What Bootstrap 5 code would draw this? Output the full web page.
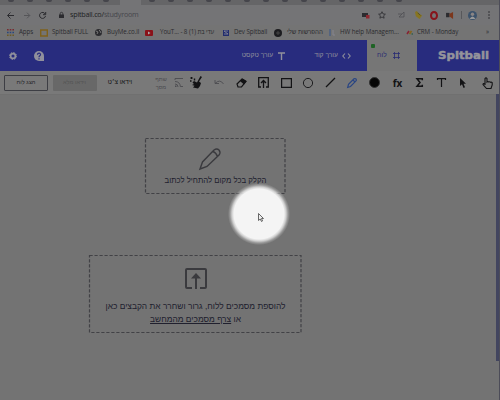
<!DOCTYPE html>
<html lang="he">
<head>
<meta charset="utf-8">
<meta name="viewport" content="width=device-width, initial-scale=1">
<title>Spitball study room</title>
<link href="https://cdn.jsdelivr.net/npm/bootstrap@5.3.0/dist/css/bootstrap.min.css" rel="stylesheet">
<style>
body{width:500px;height:400px;overflow:hidden;background:#747474;color:#2b2b2f;font:6.8px/1 "Open Sans","Liberation Sans",sans-serif;white-space:nowrap}
svg{display:block;flex:none;overflow:visible;fill:none;stroke:currentColor}
.solid{fill:currentColor;stroke:none}
.grid-row{display:grid;align-items:center;justify-items:center}
.tabstrip{height:5px;background:#656567}
.tabstrip .open-tab{margin-left:120px;width:21px;background:#747476}
.tabstrip i{width:6px;height:2px;background:#45454b;border-radius:0 0 3px 3px}
.tabstrip .gap-tabs{gap:13px}
.address{height:20px;background:#747476;grid-template-columns:20px 13px 19px 18px 289px 14px 17px 22px 14px 16px 16px 7px 15px 18px}
.address .url{font-size:7.2px;letter-spacing:-.22px;color:#1e1e23;justify-self:start}
.address .url span{color:#46464c}
.bookmarks{height:15px;padding-left:7px;background:#747474;justify-items:start;grid-template-columns:12px 21px 12px 43px 12px 38px 15px 63px 11px 40px 13px 42px 11px 66px 11px 69px 14px}
.bookmarks>span{font-size:6.2px;letter-spacing:-.06px}
.hd{direction:rtl;font-family:"Liberation Sans",sans-serif}
.topnav{height:31px;background:#282c7e;color:#90909c;grid-template-columns:25px 28px 187px 35px 13px 50px 17px 12px 133px}
.topnav .hd{font-size:6.7px}
.topnav .code-tab{justify-self:end}
.board-tab{background:#767676;color:#292c72;width:50px;height:31px;padding:0 17px 0 10px}
.live-dot{left:4px;top:4px;width:4px;height:4px;background:#1e6325;border-radius:1px}
.logo-word{font:bold 10.6px "DejaVu Sans",sans-serif;fill:#94949b;stroke:#94949b;stroke-width:.5;margin-left:21px}
.tools{height:23px;background:#797979;color:#131315;grid-template-columns:52px 44px 48px 30px 10px 24px 22px 22px 23px 22px 22px 22px 22px 23px 23px 21px 22px 22px 26px}
.tools>.hd{font-size:6.4px}
.tools>.box-btn{width:44px;height:16px;font-size:5.7px;padding:0;border-radius:1px;display:flex;align-items:center;justify-content:center}
.box-btn.show-board{border:1px solid #3d3e44;color:#252529}
.box-btn.muted-board{background:#686868;color:#545454;margin-left:1px}
.tools>.share{font-size:5.6px;line-height:8px;color:#4b4b50}
.fx-label{font-size:10px}
.dim{color:#4c4c50}
.pen-blue{color:#294583}
.canvas{height:306px;border-top:1px solid #707070;background:#737373;color:#3a3a3e}
.hint{position:relative}
.hint .frame-line{position:absolute;inset:0;width:100%;height:100%;stroke:#424246;stroke-width:1.2;stroke-dasharray:3.2 1.8}
.write-hint{width:141px;height:56px;margin:43px 0 0 145px;padding-top:10px}
.write-hint .pencil{margin-right:11px}
.upload-hint{width:213px;height:78px;margin:61px 0 0 89px;padding-top:13px}
.hint p{font-size:8.4px;line-height:12px;color:#20202e;margin:0}
.hint.write-hint p{margin-top:4.5px;font-size:7.75px}
.upload-hint p{margin-top:10px;line-height:12.5px}
.spotlight{left:224.5px;top:180px;width:68px;height:68px;background:radial-gradient(circle,#f4f4f4 0 25px,rgba(240,240,240,.75) 27px,rgba(235,235,235,.3) 29px,rgba(235,235,235,0) 31px)}
.spotlight svg{margin:7px 0 0 5px}
.scroll-edge{right:1px;top:94px;width:3px;height:267px;background:#42455f}
.page-edge{right:0;top:0;width:1px;height:400px;background:#4c4c58}
</style>
<script src="https://cdn.jsdelivr.net/npm/bootstrap@5.3.0/dist/js/bootstrap.bundle.min.js"></script>
</head>
<body class="position-relative">
<div class="tabstrip d-flex">
  <div class="d-flex gap-tabs ps-2 position-absolute"><i></i><i></i><i></i><i></i><i></i><i></i></div>
  <div class="open-tab"></div>
  <div class="d-flex gap-tabs ps-2"><i></i><i></i><i></i><i></i><i></i><i></i><i></i><i></i><i></i><i></i><i></i><i></i><i></i><i></i></div>
</div>
<div class="address grid-row">
  <svg width="7" height="7" viewBox="0 0 7 7"><path d="M7 3.5H.8M3.500.5l-3 3 3 3"/></svg>
  <svg class="dim" width="6" height="7" viewBox="0 0 6 7" stroke-width=".8"><path d="M0 3.500h5.500M3 .7l2.800 2.800L3 6.300"/></svg>
  <svg width="7" height="7" viewBox="0 0 7 7"><path d="M6.200 2A3 3 0 1 0 6.500 4M6.700 0v2.700H4"/></svg>
  <svg width="5" height="6" viewBox="0 0 5 6"><path class="solid" d="M0 2.500h5V6H0z"/><path d="M1.200 3V1.600a1.300 1.300 0 0 1 2.600 0V3" stroke-width=".8"/></svg>
  <div class="url">spitball.co/<span>studyroom</span></div>
  <svg width="8" height="7" viewBox="0 0 8 7"><path class="solid" d="M0 1h6v4H0z"/><path d="M4 3h3.500v3.500H4z" fill="#8d2830" stroke="none"/></svg>
  <svg width="8" height="8" viewBox="0 0 8 8" stroke-width=".8"><path d="m4 .7 1 2.200 2.400.3-1.800 1.600.5 2.400L4 6 1.900 7.200l.5-2.400L.6 3.200 3 2.900z"/></svg>
  <svg class="dim" width="7" height="6" viewBox="0 0 7 6" stroke-width=".7"><path d="M6 0v5H1zM0 2h4"/></svg>
  <svg width="8" height="8" viewBox="0 0 9 9"><path d="m0 1 2-1 3 3 3 2-3 4-4-3z" fill="#877522" stroke="none"/><path d="m3 2 3 3" stroke="#4f4c24"/></svg>
  <svg width="8" height="9" viewBox="0 0 8 9"><ellipse cx="4" cy="4.500" rx="3" ry="3.500" stroke="#86151c" stroke-width="2"/></svg>
  <svg width="8" height="7" viewBox="0 0 9 8"><path class="solid" d="M0 1h4v5H0z"/><path d="M4 2l4-2v8L4 5z" fill="#7c371c" stroke="none"/></svg>
  <svg class="dim" width="1" height="8" viewBox="0 0 1 8"><path d="M.5 0v8" stroke-width=".7"/></svg>
  <svg width="9" height="9" viewBox="0 0 9 9"><circle cx="4.500" cy="4.500" r="4.500" fill="#3c526b" stroke="none"/><circle cx="4.500" cy="3.300" r="1.700" fill="#8b8584" stroke="none"/><path d="M1.500 8q3-5 6 0z" fill="#999" stroke="none"/></svg>
  <svg width="2" height="8" viewBox="0 0 2 8"><g class="solid"><circle cx="1" cy="1" r=".8"/><circle cx="1" cy="4" r=".8"/><circle cx="1" cy="7" r=".8"/></g></svg>
</div>
<div class="bookmarks grid-row">
  <svg width="7" height="7" viewBox="0 0 7 7"><g stroke="none"><path d="M0 0h1.600v1.600H0zM2.700 0h1.600v1.600H2.700zM5.400 0H7v1.600H5.400z" fill="#762a30"/><path d="M0 2.700h1.600v1.600H0zM2.700 2.700h1.600v1.600H2.700zM5.400 2.700H7v1.600H5.400z" fill="#29477d"/><path d="M0 5.400h1.600V7H0zM2.700 5.400h1.600V7H2.700zM5.400 5.400H7V7H5.400z" fill="#6c5a27"/></g></svg>
  <span>Apps</span>
  <svg width="8" height="8" viewBox="0 0 8 8"><path d="M.7 1h6.600v6H.7z" stroke="#7e601b" stroke-width="1.400"/></svg>
  <span>Spitball FULL</span>
  <svg width="7" height="7" viewBox="0 0 7 7"><circle class="solid" cx="3.500" cy="3.500" r="3.500"/><path d="m1 2 2 1-1 2M4 1l1 1 1 2" stroke="#777"/></svg>
  <span>BuyMe.co.il</span>
  <svg width="8" height="6" viewBox="0 0 8 6"><rect width="8" height="6" rx="1" fill="#8a1219" stroke="none"/><path d="m3 1.500 2.500 1.500L3 4.500z" fill="#aaa" stroke="none"/></svg>
  <span>YouT... - 8 עדי בת (1)</span>
  <svg width="6" height="6" viewBox="0 0 6 6"><path d="M0 0h6v6H0z" fill="#222d6d" stroke="none"/><path d="M5 1H1l4 3H1" stroke="#8b8b99" stroke-width=".8"/></svg>
  <span>Dev Spitball</span>
  <svg width="8" height="8" viewBox="0 0 8 8"><circle cx="4" cy="4" r="4" fill="#1c1c1f" stroke="none"/><path d="M4 2v4M2 4h4" stroke="#555" stroke-width=".7"/></svg>
  <span class="hd">ההפרשות שלי</span>
  <svg width="7" height="7" viewBox="0 0 7 7"><path d="M1 0v7" stroke="#35548a"/><path d="M4 1v5h2" stroke="#858590"/></svg>
  <span>HW help Managem...</span>
  <svg width="7" height="5" viewBox="0 0 7 5" stroke-width="1.600"><path d="m1 4 2-3" stroke="#862334"/><path d="m3.500 4 2-3" stroke="#86651c"/><circle cx="6.200" cy="4" r=".8" fill="#225d40" stroke="none"/></svg>
  <span>CRM - Monday</span>
  <span>»</span>
</div>
<nav class="topnav grid-row">
  <svg width="8" height="8" viewBox="0 0 8 8"><circle cx="4" cy="4" r="2.400" stroke-width="1.700"/><circle cx="4" cy="4" r="3.500" stroke-width="1" stroke-dasharray="1.400 1.350"/></svg>
  <svg width="10" height="10" viewBox="0 0 10 10"><path class="solid" d="M5 0a5 5 0 1 0 0 10h5V5a5 5 0 0 0-5-5z"/><path d="M3.500 3.700C3.500 1.600 6.700 1.800 6.500 3.800 6.400 4.900 5 4.800 5 6.200M5 7.200v1.200" stroke="#282c7e" stroke-width="1.200"/></svg>
  <span></span>
  <span class="hd">עורך טקסט</span>
  <svg width="7" height="8" viewBox="0 0 7 8"><path d="M0 1h7M3.500 1v7" stroke-width="1.400"/></svg>
  <span class="hd code-tab">עורך קוד</span>
  <svg width="9" height="6" viewBox="0 0 9 6"><path d="M3 .5.8 3 3 5.500M6 .5 8.200 3 6 5.500" stroke-width="1.100"/></svg>
  <span></span>
  <div class="d-flex w-100 align-items-center">
    <div class="board-tab position-relative d-flex align-items-center justify-content-between">
      <i class="live-dot position-absolute"></i>
      <span class="hd">לוח</span>
      <svg width="7" height="7" viewBox="0 0 7 7" stroke-width=".8"><path d="M1.500 0v7M5.500 0v7M0 1.500h7M0 5.500h7"/></svg>
    </div>
    <svg class="logo-word" width="51" height="14"><text x="0" y="10" textLength="51" lengthAdjust="spacingAndGlyphs">Spitball</text></svg>
  </div>
</nav>
<div class="tools grid-row">
  <button class="btn box-btn show-board hd">הצג לוח</button>
  <button class="btn box-btn muted-board hd">וידאו מלא</button>
  <span class="hd">וידאו צ׳ט</span>
  <div class="share hd text-center ms-1">שתף<br>מסך</div>
  <svg class="dim" width="8" height="9" viewBox="0 0 8 9" stroke-width=".9"><path d="M0 2V.5h8M0 3.500q5 0 5.500 5.500M0 6q3 0 3 3M6 8.500h2"/><path class="solid" d="M0 7.500h1.500V9H0z"/></svg>
  <svg width="12" height="13" viewBox="0 0 12 13"><path class="solid" d="m10.500 0 1.500 1-3 4.500L11 7l-1 3-2 2.500L5.500 12 3 11.500l1.500-1.800L2 9l2-1-1.500-1.500L4 5l3 1.500z"/><path d="M.5 2h2M1.500 1v2M4.500 2.500v2M0 5h1.500" stroke-width="1.400"/></svg>
  <svg class="dim" width="10" height="5" viewBox="0 0 10 5" stroke-width=".9"><path d="M1 0v3.500h4M1 3.500q5-5 8.500.5"/></svg>
  <svg width="11" height="10" viewBox="0 0 11 10"><path d="m1 6 5-5 4 2.500L5.500 9H2z" stroke-width="1.200"/><path class="solid" d="m4 3 2.500-2.500L10.500 3 8 6.500z"/></svg>
  <svg width="11" height="11" viewBox="0 0 11 11" stroke-width="1.300"><path d="M3 10H.7V.7h9.600V10H8M5.500 11V4M3 6l2.500-2.500L8 6"/></svg>
  <svg width="11" height="10" viewBox="0 0 11 10"><path d="M.6.6h9.800v8.800H.6z" stroke-width="1.200"/></svg>
  <svg width="10" height="10" viewBox="0 0 10 10"><circle cx="5" cy="5" r="4.600" stroke-width=".9"/></svg>
  <svg width="9" height="9" viewBox="0 0 9 9"><path d="m0 9 9-9" stroke-width="1.200"/></svg>
  <svg class="pen-blue" width="10" height="10" viewBox="0 0 10 10"><path d="m.7 9.300.8-3L7 .8q1.300-.7 2.200.4.500.9-.2 1.600L3.500 8.500zM6 2l2 2" stroke-width="1.200"/></svg>
  <svg width="11" height="11" viewBox="0 0 11 11"><circle cx="5.500" cy="5.500" r="5" fill="#060606" stroke="#333"/></svg>
  <b class="fx-label">fx</b>
  <svg width="7" height="9" viewBox="0 0 7 9"><path d="M6.300 2.300V.8H1L4 4.500 1 8.200h5.300V6.700" stroke-width="1.500"/></svg>
  <svg width="9" height="9" viewBox="0 0 9 9"><path d="M.5 2V.6h8V2M4.500.6V9" stroke-width="1.200"/></svg>
  <svg width="6" height="10" viewBox="0 0 6 10"><path class="solid" d="M0 0v8l2-1.700L3.500 10 5 9.300 3.500 5.800H6z"/></svg>
  <svg width="11" height="12" viewBox="0 0 11 12" stroke-width="1.100"><path d="M3 8V1.500q1-1.300 2 0V5q1-1 1.800 0 1-.6 1.600.3 1-.5 1.800.4V8L9 11.500H4.500L1 7.500Q1 6 3 7"/></svg>
</div>
<main class="canvas">
  <div class="d-flex flex-column">
    <section class="hint write-hint d-flex flex-column align-items-center">
      <svg class="frame-line"><rect x=".5" y=".5" width="139.500" height="55"/></svg>
      <svg class="pencil" width="22" height="22" viewBox="0 0 22 22" stroke-width="1.400"><path d="m1 21 2.500-7L15 2q2.800-2 5 0 2 2.500 0 5L8 18.500zM14 3.500q3 1 4.500 5"/></svg>
      <p class="hd">הקלק בכל מקום להתחיל לכתוב</p>
    </section>
    <section class="hint upload-hint d-flex flex-column align-items-center">
      <svg class="frame-line"><rect x=".5" y=".5" width="211.500" height="77"/></svg>
      <svg width="22" height="22" viewBox="0 0 22 22" stroke-width="2"><path d="M7 20H2q-1 0-1-1V2q0-1 1-1h18q1 0 1 1v17q0 1-1 1h-5M11 21V8"/><path class="solid" d="m11 5 5 5.500H6z"/></svg>
      <p class="hd text-center">להוספת מסמכים ללוח, גרור ושחרר את הקבצים כאן<br>או <u>צרף מסמכים מהמחשב</u></p>
    </section>
  </div>
</main>
<div class="spotlight position-absolute d-flex align-items-center justify-content-center">
  <svg width="6" height="9" viewBox="0 0 6 9"><path d="M.5.5v7l1.700-1.500 1.300 2.500 1-.5L3.500 5.500h2z" stroke="#444" stroke-width=".8" fill="#eee"/></svg>
</div>
<div class="scroll-edge position-absolute"></div>
<div class="page-edge position-absolute"></div>
</body>
</html>
